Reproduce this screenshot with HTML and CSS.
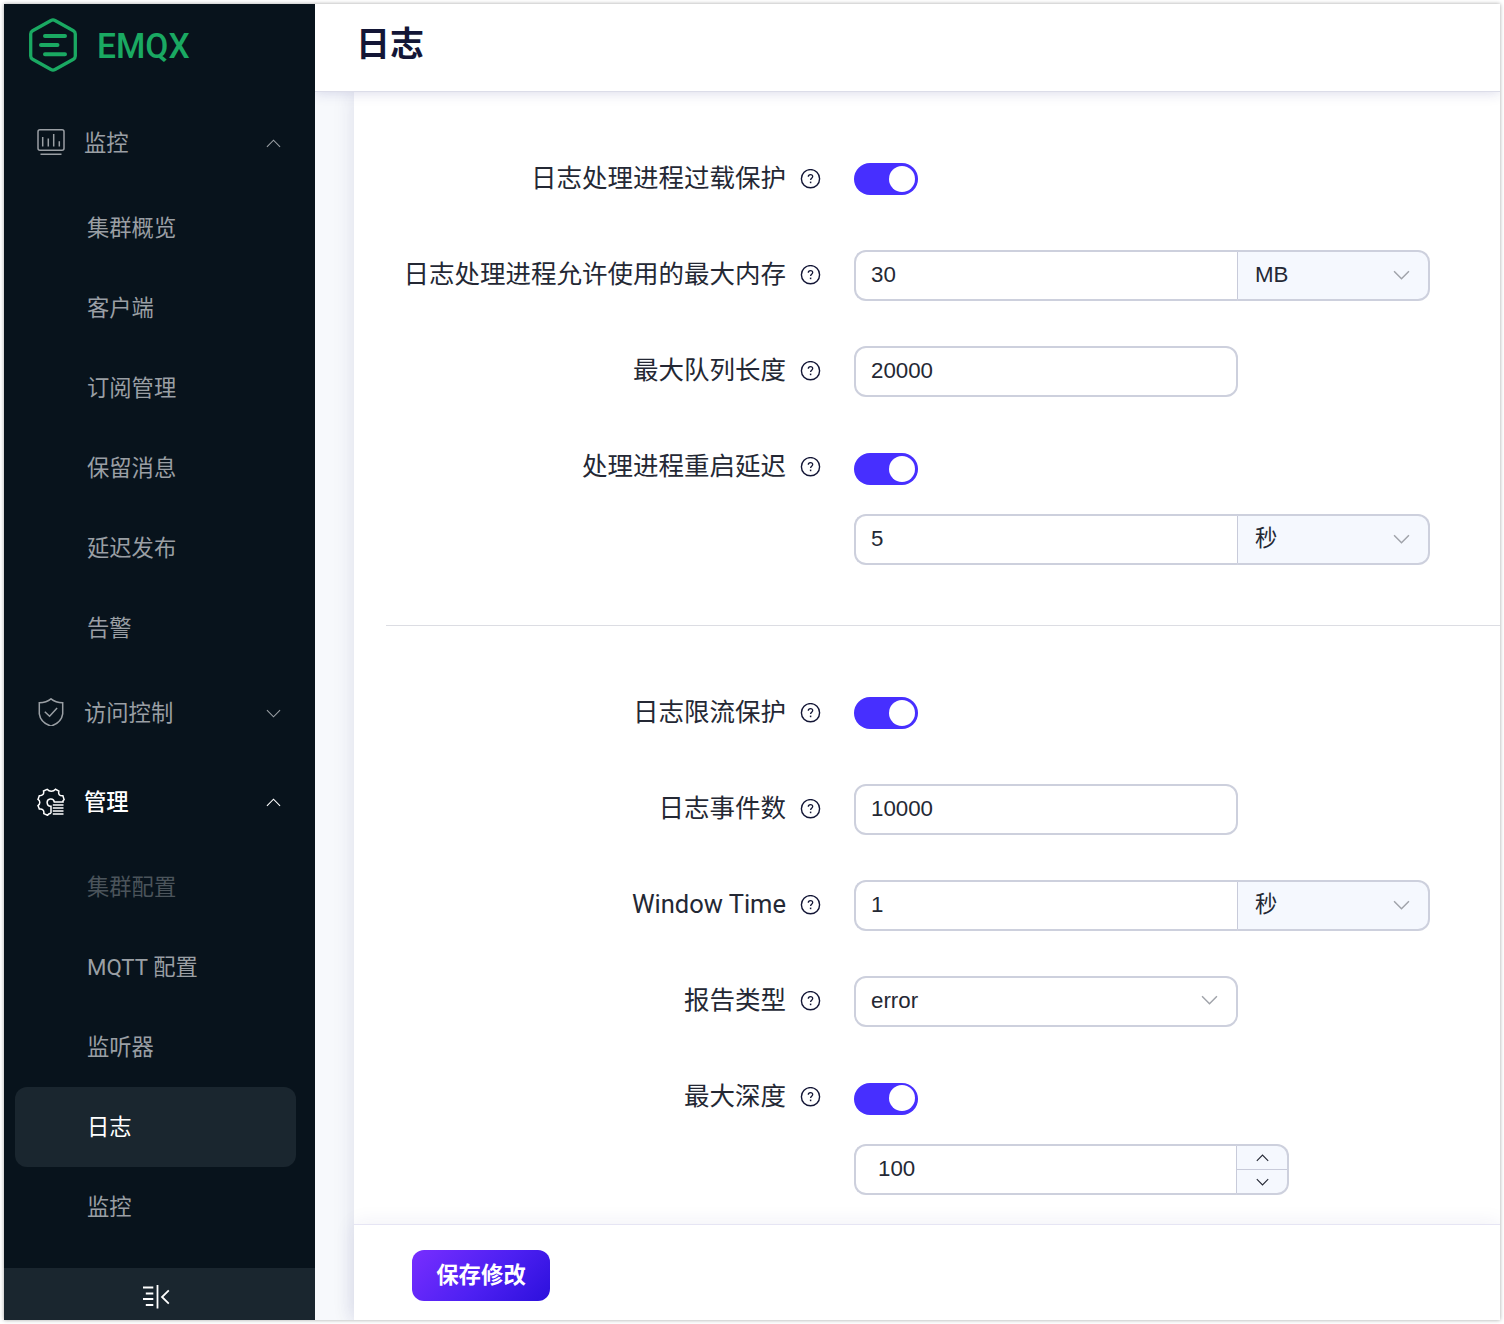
FILE: index.html
```html
<!DOCTYPE html>
<html lang="zh-CN">
<head>
<meta charset="utf-8">
<title>日志 - EMQX</title>
<link rel="stylesheet" href="styles.css">
</head>
<body>
<svg class="defs" aria-hidden="true">
  <symbol id="up" viewBox="0 0 16 9"><path d="M1 8 8 1l7 7"/></symbol>
  <symbol id="down" viewBox="0 0 16 9"><path d="m1 1 7 7 7-7"/></symbol>
  <symbol id="help" viewBox="0 0 21 20"><circle cx="10.500" cy="9.700" r="9.100" stroke-width="1.400"/><path d="M8.300 7.800c0-1.300.9-2.200 2.200-2.200s2.200.8 2.200 2c0 1.700-2.100 1.700-2.100 3.500" stroke-width="1.300"/><path d="M10.600 12.600v1.600" stroke-width="1.500"/></symbol>
</svg>
<div class="window">
  <aside class="sidebar">
    <div class="logo">
      <svg class="logo-mark" viewBox="0 0 48 54"><path d="M22 2.500q2-1.100 4 0l18.400 10.300q1.900 1.100 1.900 3.200v22q0 2.100-1.900 3.200L26 51.500q-2 1.100-4 0L3.600 41.200Q1.700 40.100 1.700 38V16q0-2.100 1.900-3.200Z" stroke-width="3.300"/><path d="M16 18h20M12 27h16.500M16 36.300h20" stroke-width="4"/></svg>
      <span>EMQX</span>
    </div>
    <nav>
      <div class="group"><svg class="gicon" viewBox="0 0 28 28"><rect x="1" y="1.800" width="26" height="20.500" rx="2"/><path d="M3.500 26.300h21M5.700 9v9.500M11.300 10.500v8M16.700 6v12.500M22.300 13.300v5.200"/></svg><span>监控</span><svg class="arrow"><use href="#up"/></svg></div>
      <ul class="items"><li>集群概览</li><li>客户端</li><li>订阅管理</li><li>保留消息</li><li>延迟发布</li><li>告警</li></ul>
      <div class="group"><svg class="gicon" viewBox="0 0 28 28"><path d="M14 .8q4.500 3.700 11.700 4v11Q24.500 24.500 14 28.100 3.500 24.500 2.300 15.800v-11q7.200-.3 11.700-4ZM7.800 13.700l4.800 4.600 7.500-8.200"/></svg><span>访问控制</span><svg class="arrow"><use href="#down"/></svg></div>
      <div class="group manage"><svg class="gicon" viewBox="0 0 28 28"><path d="M25.800 14q-.2-1.400 1.300-2.400l-1.200-3.800q-2.500.2-3.600-1.100t-.4-3.600L18.500 1.300q-1.700 2-4.200 2t-4.200-2L6.500 3q.6 2.300-.6 3.600t-3.600 1.200L1 11.400q1.800 1.100 1.800 3T1 17.500l1.400 3.600q2.400-.3 3.600.9t.8 3.600l3.700 1.700q1.400-2 3.500-2M26.800 14H17.300a3.600 3.600 0 1 0-3.300 4.200v7.100"/><path d="M15.800 17h10.700M15.800 20h10.700M15.800 23h10.700M15.800 26h10.700"/></svg><span>管理</span><svg class="arrow"><use href="#up"/></svg></div>
      <ul class="items"><li class="dim">集群配置</li><li>MQTT 配置</li><li>监听器</li><li class="active">日志</li><li>监控</li></ul>
    </nav>
    <div class="collapse"><svg viewBox="0 0 28 24"><path d="M1 2.500h10.300M3.800 8.500h7.500M1 14h10.300M3.800 20h7.500M15.500 0v23.500M26.800 5.300 20 12l6.800 6.700"/></svg></div>
  </aside>
  <div class="page">
    <header><h1>日志</h1></header>
    <main>
      <div class="card">
        <form class="form">
          <div class="row"><label>日志处理进程过载保护</label><svg class="help"><use href="#help"/></svg><i class="switch"></i></div>
          <div class="row"><label>日志处理进程允许使用的最大内存</label><svg class="help"><use href="#help"/></svg><div class="field">30</div><div class="unit"><span>MB</span><svg class="caret"><use href="#down"/></svg></div></div>
          <div class="row"><label>最大队列长度</label><svg class="help"><use href="#help"/></svg><div class="field">20000</div></div>
          <div class="row low"><label>处理进程重启延迟</label><svg class="help"><use href="#help"/></svg><i class="switch"></i></div>
          <div class="row sub"><div class="field">5</div><div class="unit"><span class="cjk">秒</span><svg class="caret"><use href="#down"/></svg></div></div>
          <hr>
          <div class="row"><label>日志限流保护</label><svg class="help"><use href="#help"/></svg><i class="switch"></i></div>
          <div class="row"><label>日志事件数</label><svg class="help"><use href="#help"/></svg><div class="field">10000</div></div>
          <div class="row"><label>Window Time</label><svg class="help"><use href="#help"/></svg><div class="field">1</div><div class="unit"><span class="cjk">秒</span><svg class="caret"><use href="#down"/></svg></div></div>
          <div class="row"><label>报告类型</label><svg class="help"><use href="#help"/></svg><div class="field">error<svg class="caret"><use href="#down"/></svg></div></div>
          <div class="row low high-knob"><label>最大深度</label><svg class="help"><use href="#help"/></svg><i class="switch"></i></div>
          <div class="row sub"><div class="field number">100</div><div class="stepper"><span><svg><use href="#up"/></svg></span><span><svg><use href="#down"/></svg></span></div></div>
        </form>
        <footer><button type="button">保存修改</button></footer>
      </div>
    </main>
  </div>
</div>
</body>
</html>
```
FILE: styles.css
```css
* { box-sizing: border-box; }
body {
  margin: 0;
  padding: 4px;
  height: 1324px;
  overflow: hidden;
  background: #fff;
  font-family: Roboto, "Noto Sans CJK SC", sans-serif;
  font-size: 22.3px;
  color: #242834;
}
svg { display: block; flex: none; fill: none; stroke: currentColor; }
.defs { position: absolute; width: 0; height: 0; }
.window {
  display: flex;
  width: 1496px;
  height: 1316px;
  box-shadow: 0 0 4px rgba(0, 0, 0, .36);
}

/* Sidebar */
.sidebar {
  display: flex;
  flex-direction: column;
  width: 311px;
  background: #08131c;
  color: #9a9fa4;
}
.logo {
  display: flex;
  align-items: center;
  gap: 20px;
  height: 82px;
  padding-left: 25px;
  color: #1aa962;
  font-size: 35.5px;
  font-weight: 500;
}
.logo-mark { width: 48px; height: 54px; stroke-linecap: round; }
.logo span { padding-top: 1px; transform: scaleX(.945); transform-origin: left; }
nav { flex: 1; }
.group {
  display: flex;
  align-items: center;
  height: 90px;
  padding: 0 34px 0 33px;
}
.group:first-child { margin-top: 12px; }
.group span { padding-bottom: 4px; }
.gicon { width: 28px; height: 28px; margin: -2px 19px 0 0; stroke-width: 1.5; }
.arrow { width: 15px; height: 9px; margin-left: auto; stroke-width: 1.2; }
.items { margin: 0; padding: 0; list-style: none; }
.items li {
  display: flex;
  align-items: center;
  height: 80px;
  margin: 0 19px 0 11px;
  padding: 0 0 4px 72px;
  border-radius: 12px;
}
.items .dim { color: #4b545b; }
.items .active { background: #1a262f; color: #fff; }
.manage { height: 89px; color: #fff; font-weight: 500; }
.manage span { padding-bottom: 5px; }
.collapse {
  display: flex;
  justify-content: center;
  align-items: center;
  height: 52px;
  padding-top: 6px;
  background: #1a262f;
  color: #fff;
}
.collapse svg { width: 28px; height: 24px; margin-right: 8px; stroke-width: 1.8; }

/* Page */
.page { flex: 1; display: flex; flex-direction: column; min-width: 0; background: #f7f9fc; }
header {
  position: relative;
  z-index: 2;
  height: 87px;
  padding: 14px 41px;
  background: #fff;
  box-shadow: 0 1px 0 #dcdde9, 0 2px 12px rgba(40, 40, 130, .17);
  clip-path: inset(0 0 -20px 0);
}
h1 { margin: 0; font-size: 34px; line-height: 52px; font-weight: 700; color: #131636; }
main { flex: 1; padding-left: 39px; overflow: hidden; }
.card {
  display: flex;
  flex-direction: column;
  height: 100%;
  background: #fff;
  box-shadow: 0 0 20px rgba(40, 40, 110, .13);
}
.form { flex: 1; padding: 40px 0 0 32px; }
.row { display: flex; align-items: center; height: 96px; }
.row label {
  width: 400px;
  padding-bottom: 3px;
  font-size: 25.5px;
  line-height: 40px;
  text-align: right;
  white-space: nowrap;
}
.help { width: 21px; height: 20px; margin: 0 33px 0 14px; color: #131636; }
.switch {
  width: 64px;
  height: 32px;
  padding: 3px;
  border-radius: 16px;
  background: #472fff;
}
.switch::before {
  content: "";
  display: block;
  width: 26px;
  height: 26px;
  margin-left: 32px;
  border-radius: 50%;
  background: #fff;
}
.low .switch { margin-top: 4px; }
.high-knob .switch { padding-top: 2px; }
.field, .unit, .stepper {
  display: flex;
  align-items: center;
  height: 51px;
  margin-top: 1px;
  border: 2px solid #cdd0dd;
  font-family: "Liberation Sans", "Noto Sans CJK SC", sans-serif;
}
.field {
  width: 384px;
  padding: 0 18px 1px 15px;
  border-radius: 12px;
}
.field:not(:last-child) { width: 383px; border-right: 0; border-radius: 12px 0 0 12px; }
.unit, .stepper {
  border-left: 1px solid #c8cbda;
  border-radius: 0 12px 12px 0;
  background: #f5f8fe;
}
.unit { width: 193px; padding: 0 18px 0 17px; }
.unit span { padding-bottom: 1px; }
.unit .cjk { padding-bottom: 7px; }
.caret { width: 17px; height: 10px; margin: -2px 0 0 auto; color: #a0a3aa; stroke-width: 1.4; }
.sub { height: 48px; padding-left: 468px; }
.field.number:not(:last-child) { width: 382px; padding-left: 22px; }
.stepper { flex-direction: column; width: 53px; }
.stepper span { flex: 1; display: grid; place-items: center; width: 100%; }
.stepper span + span { border-top: 1px solid #c8cbda; }
.stepper svg { width: 13px; height: 8px; stroke-width: 1.4; }
hr { height: 1px; margin: 62px 0 39px; border: 0; background: #dcdde3; }
footer {
  position: relative;
  height: 96px;
  padding: 25px 58px;
  border-top: 1px solid #e6e5f4;
  background: #fff;
  box-shadow: 0 0 20px rgba(40, 40, 130, .08);
}
button {
  display: block;
  width: 138px;
  height: 51px;
  padding: 0 0 6px;
  border: 0;
  border-radius: 12px;
  background: linear-gradient(135deg, #782eff 0%, #4d20f2 55%, #2c10dc 100%);
  color: #fff;
  font: 700 22.4px Roboto, "Noto Sans CJK SC", sans-serif;
}
```
